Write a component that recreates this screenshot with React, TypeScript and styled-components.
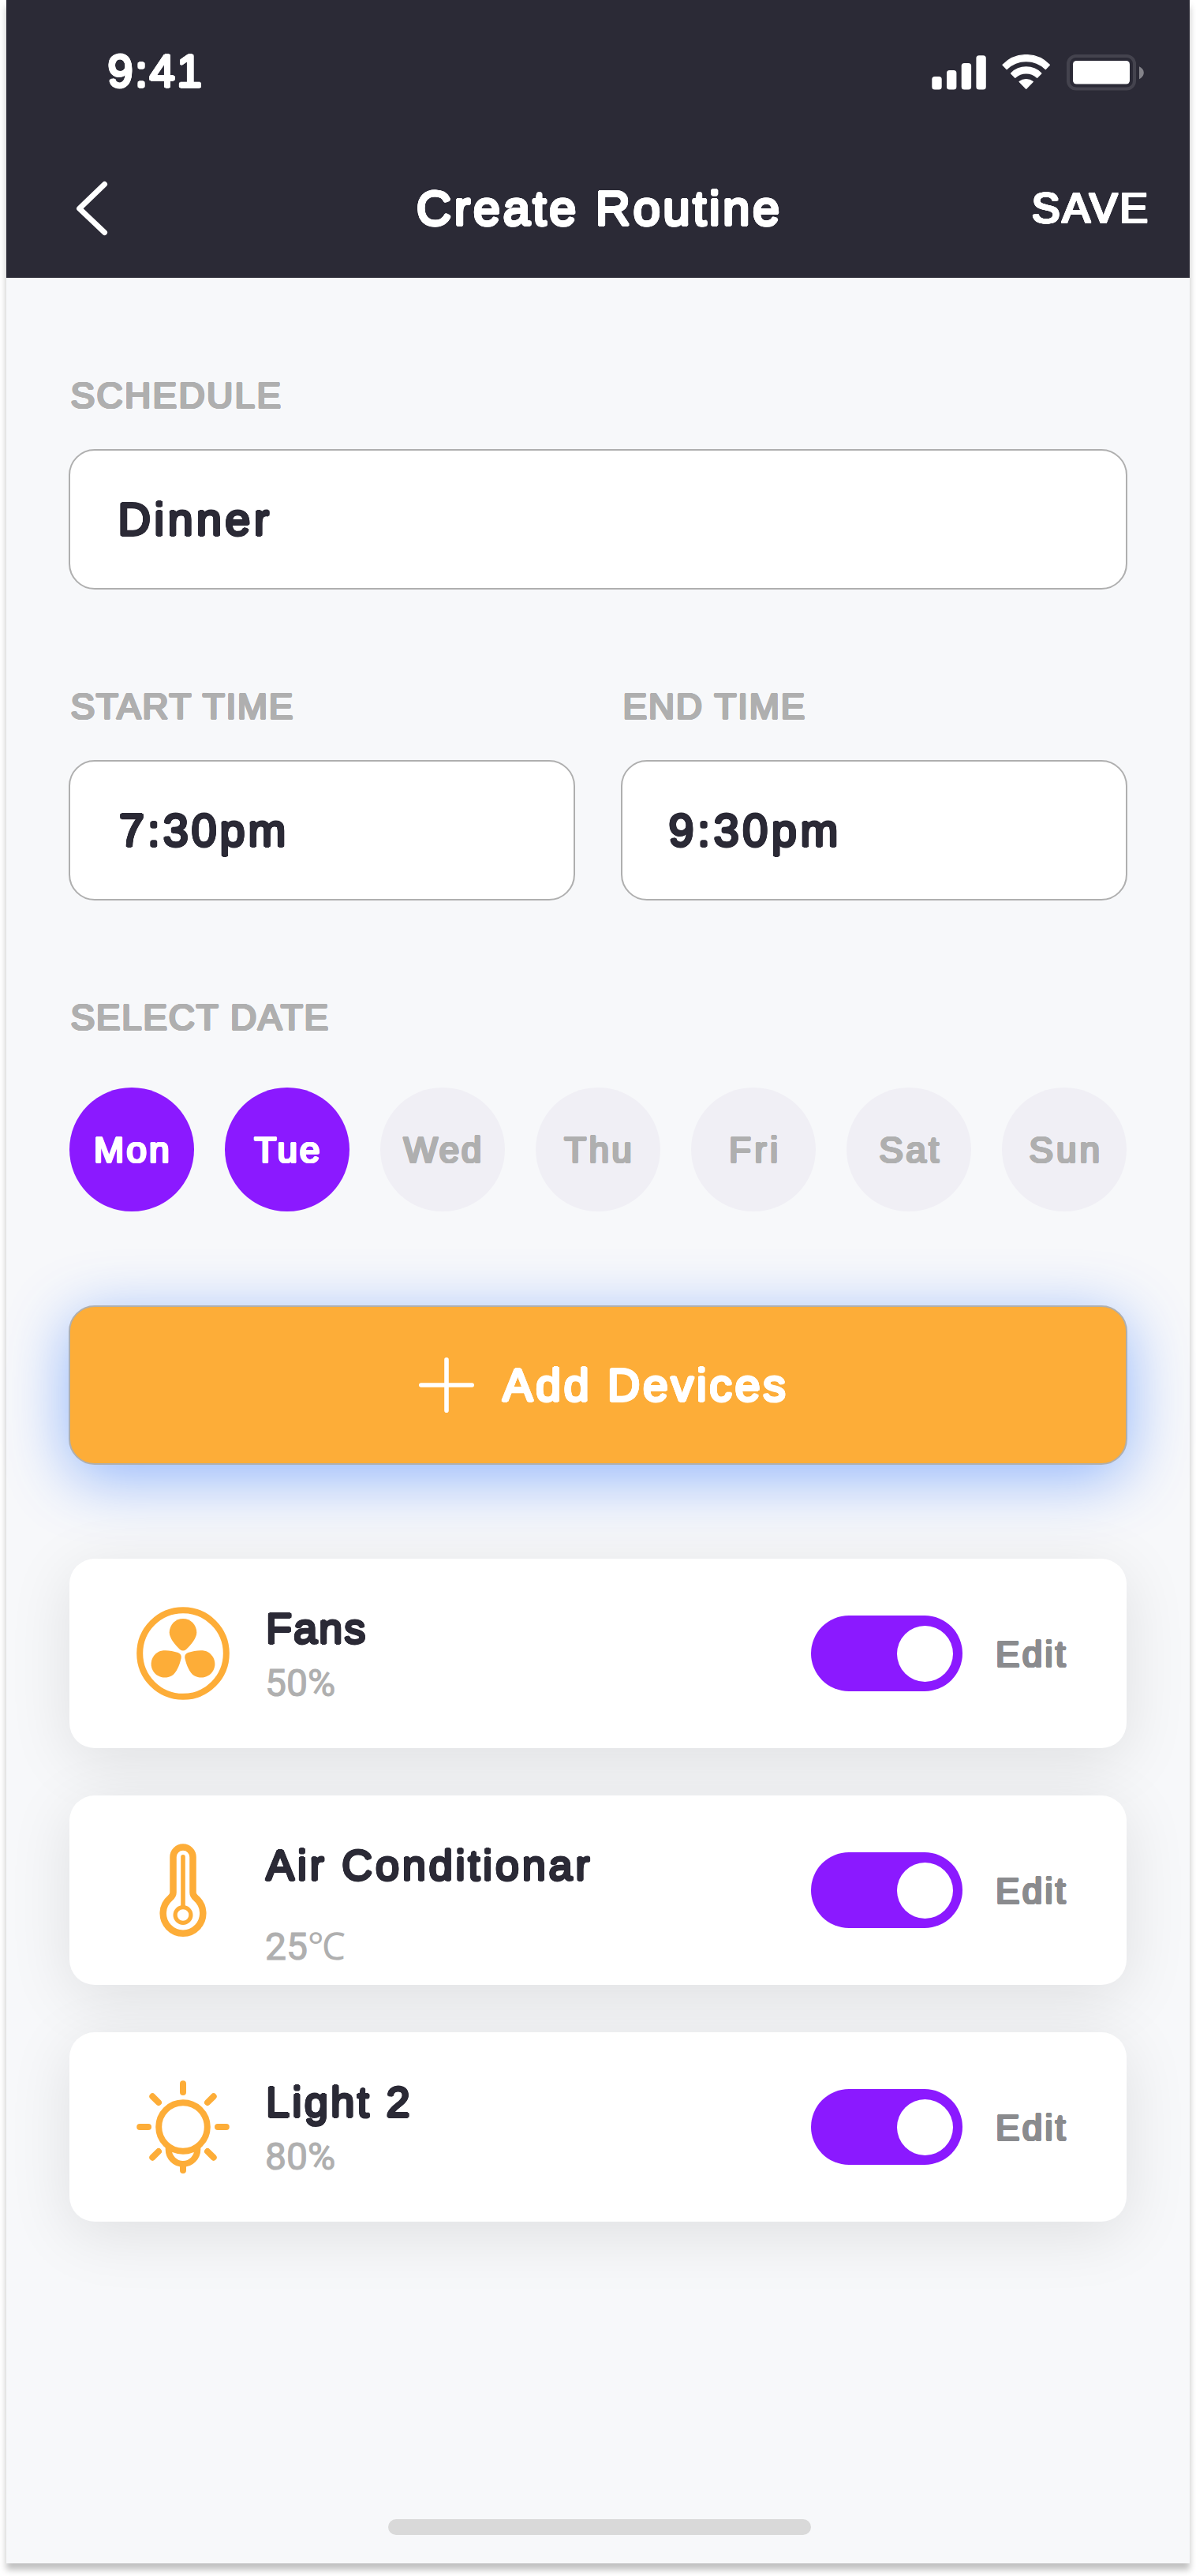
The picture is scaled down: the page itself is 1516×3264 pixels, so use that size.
import React, { useState } from 'react';
import styled, { createGlobalStyle, css } from 'styled-components';

const colors = {
  ink: '#2b2a36',
  page: '#f7f8fa',
  accent: '#8b19ff',
  amber: '#fdad38',
  muted: '#afafaf',
  edit: '#8a8b8e',
  idleDay: '#f0eff5',
  white: '#ffffff',
};

/* Thickens the strokes evenly in every direction, which rounds the letter ends. */
const roundedWeight = (radius: number) =>
  Array.from({ length: 16 }, (_, i) => {
    const a = (i * Math.PI) / 8;
    return `${(Math.cos(a) * radius).toFixed(4)}em ${(Math.sin(a) * radius).toFixed(4)}em 0 currentColor`;
  }).join(', ');

const rounded = css<{ $track?: number }>`
  font-family: 'Liberation Sans', Arial, sans-serif;
  font-weight: 400;
  letter-spacing: ${(p) => p.$track ?? 0}px;
  margin-right: ${(p) => -(p.$track ?? 0)}px;
  text-shadow: ${roundedWeight(0.028)};
  white-space: nowrap;
`;

const GlobalStyle = createGlobalStyle`
  *, *::before, *::after { box-sizing: border-box; }
  body { margin: 0; background: #fff; }
  button { border: 0; padding: 0; background: none; color: inherit; cursor: pointer; }
`;

const Stage = styled.div`
  height: 3264px;
  padding: 0 8px;
  overflow: hidden;
`;

const Phone = styled.div`
  display: flex;
  flex-direction: column;
  width: 1500px;
  height: 3248px;
  background: ${colors.page};
  box-shadow: 0 8px 8px rgba(0, 0, 0, 0.25);
`;

const Header = styled.header`
  height: 352px;
  background: ${colors.ink};
  color: ${colors.white};
`;

const StatusBar = styled.div`
  display: flex;
  align-items: center;
  justify-content: space-between;
  height: 180px;
  padding: 0 58px 0 128.5px;
`;

const Clock = styled.span`
  ${rounded}
  font-size: 57.5px;
  line-height: 64px;
`;

const StatusIcons = styled.div`
  display: flex;
  align-items: center;
  gap: 20px;
  padding-top: 3px;
  svg { display: block; }
`;

const NavBar = styled.div`
  display: grid;
  grid-template-columns: 1fr auto 1fr;
  align-items: center;
  height: 167px;
  padding: 0 53px 0 85px;
`;

const BackButton = styled.button`
  justify-self: start;
  svg { display: block; }
`;

const Title = styled.h1`
  ${rounded}
  margin-top: 0;
  margin-bottom: 0;
  padding-right: 32px;
  font-size: 61.5px;
  line-height: 72px;
`;

const SaveButton = styled.button`
  ${rounded}
  justify-self: end;
  font-size: 53.5px;
  line-height: 64px;
`;

const Body = styled.main`
  flex: 1;
  display: flex;
  flex-direction: column;
  padding: 119px 80px 36px;
`;

const Row = styled.div`
  display: grid;
  grid-auto-flow: column;
  grid-auto-columns: 1fr;
  gap: 58px;
  margin: 0 -1px 118px;
`;

const Group = styled.section`
  display: flex;
  flex-direction: column;
`;

const Label = styled.h2`
  ${rounded}
  margin-top: 0;
  margin-bottom: 38px;
  padding-left: 2.5px;
  color: ${colors.muted};
  font-size: 46px;
  line-height: 60px;
`;

const Field = styled.div<{ $indent: number }>`
  display: flex;
  align-items: center;
  height: 178px;
  padding-left: ${(p) => p.$indent}px;
  border: 2px solid ${colors.muted};
  border-radius: 33px;
  background: ${colors.white};
`;

const FieldValue = styled.span`
  ${rounded}
  color: ${colors.ink};
  font-size: 57.5px;
  line-height: 68px;
`;

const Days = styled.div`
  display: flex;
  justify-content: space-between;
  margin: 20.5px 1px 0;
`;

const Day = styled.button<{ $on: boolean }>`
  display: flex;
  align-items: center;
  justify-content: center;
  width: 157.5px;
  height: 157.5px;
  padding-top: 1px;
  border-radius: 50%;
  background: ${(p) => (p.$on ? colors.accent : colors.idleDay)};
  color: ${(p) => (p.$on ? colors.white : colors.muted)};
`;

const DayName = styled.span`
  ${rounded}
  font-size: 46px;
  line-height: 56px;
`;

const AddButton = styled.button`
  display: flex;
  align-items: center;
  justify-content: center;
  gap: 36px;
  height: 202px;
  margin: 1px -1px 119px;
  padding-left: 11px;
  border: 2px solid ${colors.muted};
  border-radius: 33px;
  background: ${colors.amber};
  color: ${colors.white};
  box-shadow: 0 16px 80px rgba(0, 89, 255, 0.42);
`;

const AddLabel = styled.span`
  ${rounded}
  font-size: 57.5px;
  line-height: 64px;
`;

const DeviceList = styled.div`
  display: flex;
  flex-direction: column;
  gap: 60px;
`;

const Card = styled.article`
  display: flex;
  align-items: center;
  height: 240px;
  padding: 0 77.5px 0 85px;
  border-radius: 32px;
  background: ${colors.white};
  box-shadow: 0 16px 80px rgba(0, 0, 0, 0.1);
  > svg { flex: none; }
`;

const DeviceText = styled.div`
  flex: 1;
  align-self: stretch;
  display: flex;
  flex-direction: column;
  align-items: flex-start;
  padding: 56px 0 0 46px;
`;

const DeviceName = styled.h3`
  ${rounded}
  margin-top: 0;
  margin-bottom: 0;
  color: ${colors.ink};
  font-size: 54px;
  line-height: 64px;
`;

const DeviceLevel = styled.span<{ $drop?: boolean }>`
  height: 58px;
  margin-top: ${(p) => (p.$drop ? 43 : 9)}px;
  margin-left: -1px;
  color: ${colors.muted};
  font-family: Roboto, sans-serif;
  font-size: 48px;
  line-height: 58px;
  -webkit-text-stroke: 1.1px ${colors.muted};
`;

const Unit = styled.span`
  font-family: 'Open Sans', sans-serif;
  line-height: 1;
  -webkit-text-stroke: 0;
`;

const Switch = styled.button<{ $on: boolean }>`
  display: flex;
  align-items: center;
  justify-content: ${(p) => (p.$on ? 'flex-end' : 'flex-start')};
  width: 192px;
  height: 96px;
  margin-right: 41.5px;
  padding: 0 12.5px;
  border-radius: 48px;
  background: ${(p) => (p.$on ? colors.accent : colors.muted)};
`;

const Knob = styled.span`
  width: 71px;
  height: 71px;
  border-radius: 50%;
  background: ${colors.white};
`;

const EditButton = styled.button`
  ${rounded}
  padding-top: 1px;
  color: ${colors.edit};
  font-size: 46px;
  line-height: 56px;
`;

const HomeIndicator = styled.div`
  align-self: center;
  width: 536px;
  height: 20px;
  margin-top: auto;
  margin-left: 4px;
  border-radius: 10px;
  background: #d9d9d9;
`;

const SignalIcon = () => (
  <svg width="69" height="46" viewBox="0 0 69 46" fill="#fff">
    <rect x="0.3" y="28" width="12.4" height="16.6" rx="3.6" />
    <rect x="19" y="20" width="12.4" height="24.6" rx="3.6" />
    <rect x="37.7" y="11" width="12.4" height="33.6" rx="3.6" />
    <rect x="56.4" y="1.3" width="12.4" height="43.3" rx="3.6" />
  </svg>
);

const WifiIcon = () => (
  <svg width="62" height="46" viewBox="0 0 62 46" fill="#fff" stroke="#fff" strokeWidth="1.4" strokeLinejoin="round">
    <path d="M1.1 13.2A41.2 41.2 0 0 1 60.3 13.2L55.3 18.4A35.4 35.4 0 0 0 6.1 18.4Z" />
    <path d="M11.6 23.9A27.2 27.2 0 0 1 49.8 23.9L44.6 29.2A20.5 20.5 0 0 0 16.8 29.2Z" />
    <path d="M22.2 34.6A13.5 13.5 0 0 1 39.2 34.6L30.7 43.2Z" />
  </svg>
);

const BatteryIcon = () => (
  <svg width="98" height="46" viewBox="0 0 98 46">
    <rect x="2" y="2" width="84" height="41.6" rx="10" fill="none" stroke="#fff" strokeOpacity="0.12" strokeWidth="4" />
    <rect x="8" y="8" width="72" height="29.6" rx="4.5" fill="#fff" />
    <path d="M92 15.2C95.5 16.8 97.8 19.6 97.8 23C97.8 26.4 95.5 29.6 92 31.2Z" fill="#fff" fillOpacity="0.42" />
  </svg>
);

const ChevronIcon = () => (
  <svg width="48" height="72" viewBox="0 0 48 72" fill="none" stroke="#fff" strokeWidth="7" strokeLinecap="round" strokeLinejoin="round">
    <path d="M39.5 5.5L7.6 36.2L39.5 66.5" />
  </svg>
);

const PlusIcon = () => (
  <svg width="70" height="70" viewBox="0 0 70 70" fill="none" stroke="#fff" strokeWidth="5.6" strokeLinecap="round">
    <path d="M35 2.8V67.2M2.8 35H67.2" />
  </svg>
);

const blade =
  'M59 15C68.6 15 76.3 22.8 76.3 32.6C76.3 39.4 69.5 48 63 54Q59 57.2 55 54C48.5 48 41.7 39.4 41.7 32.6C41.7 22.8 49.4 15 59 15Z';

const FanIcon = () => (
  <svg width="118" height="118" viewBox="0 0 118 118" fill={colors.amber}>
    <circle cx="59" cy="59" r="54.8" fill="none" stroke={colors.amber} strokeWidth="8" />
    <path d={blade} />
    <path d={blade} transform="rotate(120 59 59)" />
    <path d={blade} transform="rotate(240 59 59)" />
  </svg>
);

const ThermometerIcon = () => (
  <svg width="118" height="118" viewBox="0 0 118 118" fill="none" stroke={colors.amber} strokeLinecap="round" strokeLinejoin="round">
    <path strokeWidth="8.5" d="M46.5 17A12.5 12.5 0 0 1 71.5 17V62C71.5 65.5 73 67 75.3 69A25.3 25.3 0 1 1 42.7 69C45 67 46.5 65.5 46.5 62Z" />
    <path strokeWidth="5.6" d="M59 16.8V79" />
    <circle cx="59" cy="90.5" r="9.9" strokeWidth="5.2" />
  </svg>
);

const BulbIcon = () => (
  <svg width="118" height="118" viewBox="0 0 118 118" fill="none" stroke={colors.amber} strokeWidth="8" strokeLinecap="round">
    <circle cx="59" cy="59" r="30.8" />
    <path d="M40.7 85V87.6A18.3 18.3 0 0 0 77.3 87.6V85" />
    <path d="M59 108V114M59 4.2V15M4.2 59H15M103 59H113.8" />
    <path d="M20.3 20.3L28 28M97.7 20.3L90 28M20.3 97.7L28 90M97.7 97.7L90 90" />
  </svg>
);

const week: { name: string; track: number }[] = [
  { name: 'Mon', track: 3.1 },
  { name: 'Tue', track: 2.8 },
  { name: 'Wed', track: 2.5 },
  { name: 'Thu', track: 3.2 },
  { name: 'Fri', track: 4.3 },
  { name: 'Sat', track: 3.4 },
  { name: 'Sun', track: 3.9 },
];

const devices = [
  { name: 'Fans', track: 2.1, level: '50%', unit: '', Icon: FanIcon },
  { name: 'Air Conditionar', track: 3.8, level: '25', unit: '℃', Icon: ThermometerIcon },
  { name: 'Light 2', track: 3.4, level: '80%', unit: '', Icon: BulbIcon },
];

export default function App() {
  const [days, setDays] = useState<string[]>(['Mon', 'Tue']);
  const [off, setOff] = useState<string[]>([]);
  const flip = (list: string[], item: string) =>
    list.includes(item) ? list.filter((i) => i !== item) : [...list, item];

  return (
    <Stage>
      <GlobalStyle />
      <Phone>
        <Header>
          <StatusBar>
            <Clock $track={2.6}>9:41</Clock>
            <StatusIcons>
              <SignalIcon />
              <WifiIcon />
              <BatteryIcon />
            </StatusIcons>
          </StatusBar>
          <NavBar>
            <BackButton aria-label="Back">
              <ChevronIcon />
            </BackButton>
            <Title $track={3.6}>Create Routine</Title>
            <SaveButton $track={2.8}>SAVE</SaveButton>
          </NavBar>
        </Header>

        <Body>
          <Row>
            <Group>
              <Label $track={2.3}>SCHEDULE</Label>
              <Field $indent={60.5}>
                <FieldValue $track={4.4}>Dinner</FieldValue>
              </Field>
            </Group>
          </Row>
          <Row>
            <Group>
              <Label $track={1.6}>START TIME</Label>
              <Field $indent={62}>
                <FieldValue $track={3.9}>7:30pm</FieldValue>
              </Field>
            </Group>
            <Group>
              <Label $track={1.7}>END TIME</Label>
              <Field $indent={58.5}>
                <FieldValue $track={4.6}>9:30pm</FieldValue>
              </Field>
            </Group>
          </Row>
          <Row>
            <Group>
              <Label $track={1.65}>SELECT DATE</Label>
              <Days>
                {week.map(({ name, track }) => (
                  <Day key={name} $on={days.includes(name)} onClick={() => setDays(flip(days, name))}>
                    <DayName $track={track}>{name}</DayName>
                  </Day>
                ))}
              </Days>
            </Group>
          </Row>

          <AddButton>
            <PlusIcon />
            <AddLabel $track={3.6}>Add Devices</AddLabel>
          </AddButton>

          <DeviceList>
            {devices.map(({ name, track, level, unit, Icon }) => (
              <Card key={name}>
                <Icon />
                <DeviceText>
                  <DeviceName $track={track}>{name}</DeviceName>
                  <DeviceLevel $drop={unit !== ''}>
                    {level}
                    {unit && <Unit>{unit}</Unit>}
                  </DeviceLevel>
                </DeviceText>
                <Switch
                  role="switch"
                  aria-checked={!off.includes(name)}
                  $on={!off.includes(name)}
                  onClick={() => setOff(flip(off, name))}
                >
                  <Knob />
                </Switch>
                <EditButton $track={3.1}>Edit</EditButton>
              </Card>
            ))}
          </DeviceList>

          <HomeIndicator />
        </Body>
      </Phone>
    </Stage>
  );
}
